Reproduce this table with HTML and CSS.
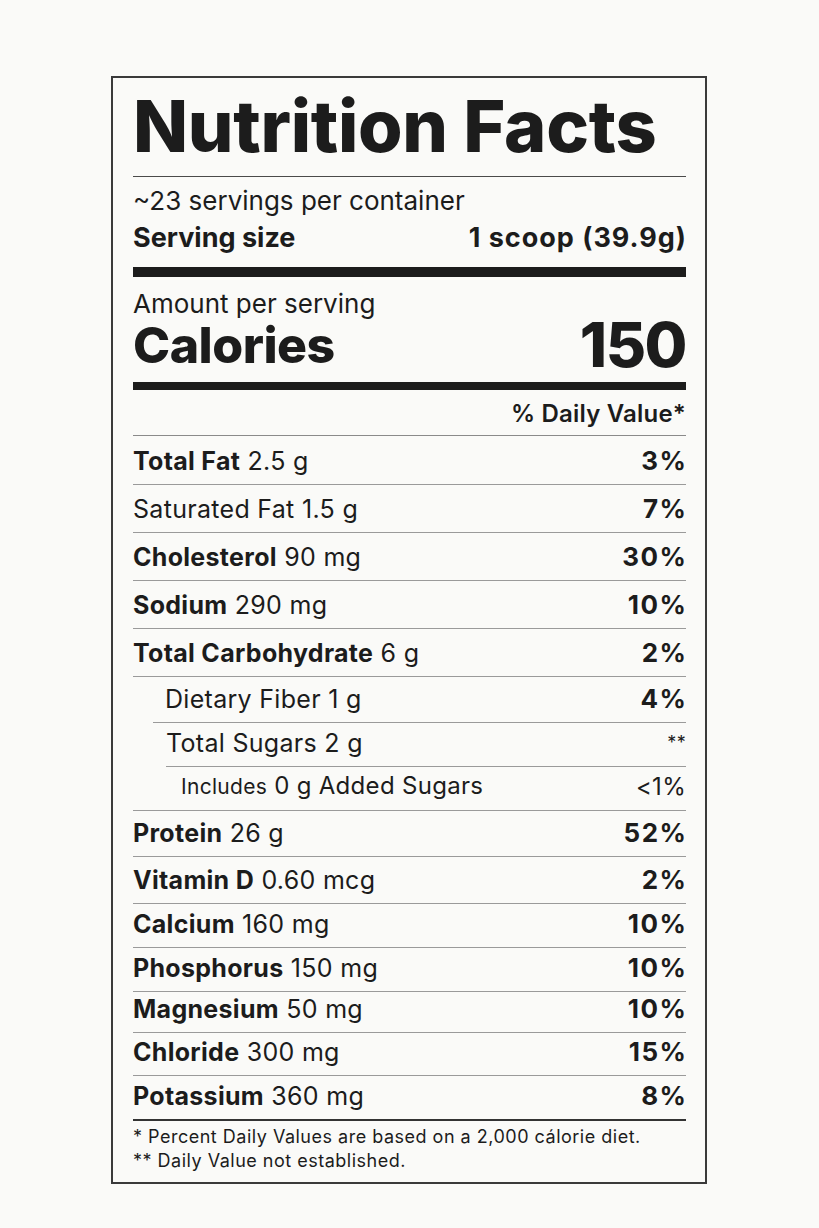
FILE: index.html
```html
<!DOCTYPE html>
<html lang="en">
<head>
<meta charset="utf-8">
<title>Nutrition Facts</title>
<link rel="stylesheet" href="styles.css">
</head>
<body>
<section class="label">
  <h1 class="title">Nutrition Facts</h1>
  <div class="servings">
    <p class="per-container">~23 servings per container</p>
    <p class="serving-size"><span>Serving size</span><span class="size-value">1 scoop (39.9g)</span></p>
  </div>
  <div class="bar bar-thick"></div>
  <p class="amount">Amount per serving</p>
  <div class="calories"><span class="cal-label">Calories</span><span class="cal-value">150</span></div>
  <div class="bar bar-mid"></div>
  <p class="dv-head">% Daily Value*</p>
  <ul class="rows">
    <li class="row h49"><span><b>Total Fat</b> 2.5 g</span><b class="pct">3%</b></li>
    <li class="row h48"><span>Saturated Fat 1.5 g</span><b class="pct">7%</b></li>
    <li class="row h48"><span><b>Cholesterol</b> 90 mg</span><b class="pct">30%</b></li>
    <li class="row h48"><span><b>Sodium</b> 290 mg</span><b class="pct">10%</b></li>
    <li class="row h48"><span><b>Total Carbohydrate</b> 6 g</span><b class="pct">2%</b></li>
    <li class="row h46 sub1"><span>Dietary Fiber 1 g</span><b class="pct">4%</b></li>
    <li class="row h44 sub2"><span>Total Sugars 2 g</span><span class="stars">**</span></li>
    <li class="row h44 sub3"><span><span class="inc">Includes</span> 0 g Added Sugars</span><span class="pct-light">&lt;1%</span></li>
    <li class="row h46"><span><b>Protein</b> 26 g</span><b class="pct">52%</b></li>
    <li class="row h47"><span><b>Vitamin D</b> 0.60 mcg</span><b class="pct">2%</b></li>
    <li class="row h44"><span><b>Calcium</b> 160 mg</span><b class="pct">10%</b></li>
    <li class="row h44"><span><b>Phosphorus</b> 150 mg</span><b class="pct">10%</b></li>
    <li class="row h41"><span><b>Magnesium</b> 50 mg</span><b class="pct">10%</b></li>
    <li class="row h43"><span><b>Chloride</b> 300 mg</span><b class="pct">15%</b></li>
    <li class="row h45 last"><span><b>Potassium</b> 360 mg</span><b class="pct">8%</b></li>
  </ul>
  <div class="notes">
    <p>* Percent Daily Values are based on a 2,000 cálorie diet.</p>
    <p>** Daily Value not established.</p>
  </div>
</section>
</body>
</html>
```
FILE: styles.css
```css
* { box-sizing: border-box; }
html, body { margin: 0; padding: 0; }
body {
  background: #fafaf8;
  font-family: Inter, "Liberation Sans", sans-serif;
  color: #1c1c1c;
}
p, h1, ul { margin: 0; padding: 0; }
ul { list-style: none; }

.label {
  width: 596px;
  margin: 76px 0 0 111px;
  border: 2px solid #3a3a3a;
  padding: 8px 19px 9px 20px;
}

.title {
  font-size: 72px;
  font-weight: 800;
  line-height: 80px;
  letter-spacing: -0.3px;
  border-bottom: 1.5px solid #4a4a4a;
  padding-bottom: 10px;
}

.servings { padding-top: 9px; }
.per-container {
  font-size: 26px;
  line-height: 30px;
}
.serving-size {
  display: flex;
  justify-content: space-between;
  font-size: 27px;
  font-weight: 700;
  line-height: 30px;
  margin-top: 7px;
}
.size-value { letter-spacing: 1px; margin-right: -1px; }

.bar { background: #1c1c1c; }
.bar-thick { height: 10px; margin-top: 14px; }
.bar-mid { height: 8px; margin-top: 9px; }

.amount {
  font-size: 26px;
  line-height: 26px;
  margin-top: 14px;
}
.calories {
  display: flex;
  justify-content: space-between;
  align-items: flex-end;
  font-weight: 800;
}
.cal-label { font-size: 50px; line-height: 56px; letter-spacing: -0.5px; }
.cal-value { font-size: 62px; line-height: 56px; letter-spacing: -1.5px; }

.dv-head {
  text-align: right;
  font-size: 24px;
  font-weight: 600;
  line-height: 28px;
  letter-spacing: 0.2px;
  margin-top: 10px;
  padding-bottom: 7px;
  border-bottom: 1.5px solid #8a8a8a;
}

.row {
  display: flex;
  justify-content: space-between;
  align-items: flex-end;
  font-size: 25px;
  line-height: 28px;
  letter-spacing: 0.3px;
  padding-bottom: 9px;
  border-bottom: 1.5px solid #9a9a9a;
}
.row b { font-weight: 700; }
.row .pct {
  font-size: 26px;
  letter-spacing: 1.5px;
  margin-right: -1.5px;
}
.pct-light { font-size: 24px; }
.stars { font-size: 18px; font-weight: 400; }
.h41 { height: 41px; }
.h43 { height: 43px; }
.h44 { height: 44px; }
.h45 { height: 45px; }
.h46 { height: 46px; }
.h47 { height: 47px; }
.h48 { height: 48px; }
.h49 { height: 49px; }

.sub1 { margin-left: 20px; padding-left: 12px; }
.sub2 { margin-left: 33px; }
.sub3 { padding-left: 48px; font-size: 24px; }
.inc { font-size: 21px; }
.last { border-bottom: 2px solid #333; }

.notes {
  padding-top: 3.5px;
  font-size: 18px;
  line-height: 24px;
  letter-spacing: 0.5px;
}
```
